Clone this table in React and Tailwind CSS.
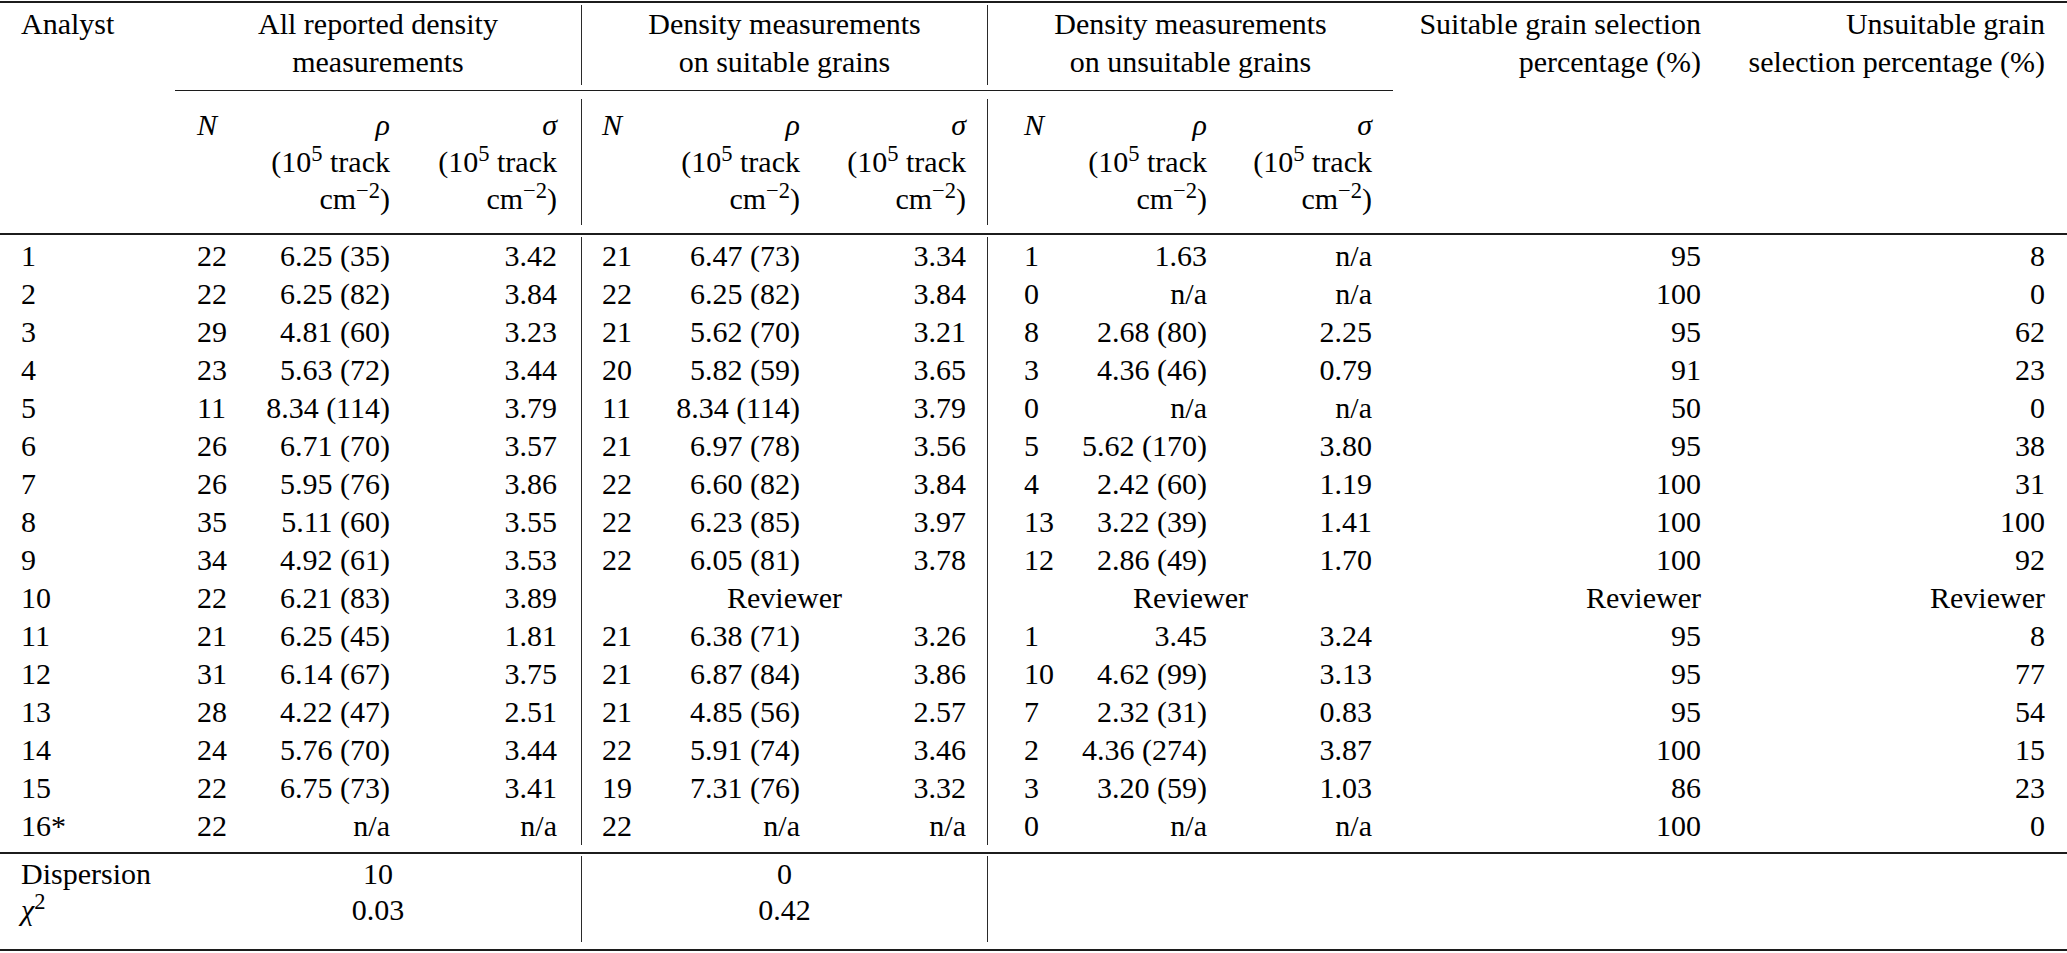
import React from "react";

// one grid for every row, so the columns line up all the way down
const COLS =
  "grid grid-cols-[175px_65px_150px_191px_69px_150px_187px_73px_147px_186px_328px_346px] whitespace-nowrap";
const VL = "border-l border-[#2a2a2a]";

const rows = [
  ["1", "22", "6.25 (35)", "3.42", "21", "6.47 (73)", "3.34", "1", "1.63", "n/a", "95", "8"],
  ["2", "22", "6.25 (82)", "3.84", "22", "6.25 (82)", "3.84", "0", "n/a", "n/a", "100", "0"],
  ["3", "29", "4.81 (60)", "3.23", "21", "5.62 (70)", "3.21", "8", "2.68 (80)", "2.25", "95", "62"],
  ["4", "23", "5.63 (72)", "3.44", "20", "5.82 (59)", "3.65", "3", "4.36 (46)", "0.79", "91", "23"],
  ["5", "11", "8.34 (114)", "3.79", "11", "8.34 (114)", "3.79", "0", "n/a", "n/a", "50", "0"],
  ["6", "26", "6.71 (70)", "3.57", "21", "6.97 (78)", "3.56", "5", "5.62 (170)", "3.80", "95", "38"],
  ["7", "26", "5.95 (76)", "3.86", "22", "6.60 (82)", "3.84", "4", "2.42 (60)", "1.19", "100", "31"],
  ["8", "35", "5.11 (60)", "3.55", "22", "6.23 (85)", "3.97", "13", "3.22 (39)", "1.41", "100", "100"],
  ["9", "34", "4.92 (61)", "3.53", "22", "6.05 (81)", "3.78", "12", "2.86 (49)", "1.70", "100", "92"],
  ["10", "22", "6.21 (83)", "3.89"],
  ["11", "21", "6.25 (45)", "1.81", "21", "6.38 (71)", "3.26", "1", "3.45", "3.24", "95", "8"],
  ["12", "31", "6.14 (67)", "3.75", "21", "6.87 (84)", "3.86", "10", "4.62 (99)", "3.13", "95", "77"],
  ["13", "28", "4.22 (47)", "2.51", "21", "4.85 (56)", "2.57", "7", "2.32 (31)", "0.83", "95", "54"],
  ["14", "24", "5.76 (70)", "3.44", "22", "5.91 (74)", "3.46", "2", "4.36 (274)", "3.87", "100", "15"],
  ["15", "22", "6.75 (73)", "3.41", "19", "7.31 (76)", "3.32", "3", "3.20 (59)", "1.03", "86", "23"],
  ["16*", "22", "n/a", "n/a", "22", "n/a", "n/a", "0", "n/a", "n/a", "100", "0"],
];

function Unit({ sym }) {
  return (
    <>
      <i>{sym}</i>
      <br />
      (10<sup>5</sup> track
      <br />
      cm<sup>−2</sup>)
    </>
  );
}

function DataRow({ r }) {
  return (
    <div className={COLS + " h-[38px] leading-[38px]"}>
      <div className="pl-[21px]">{r[0]}</div>
      <div className="pl-[22px]">{r[1]}</div>
      <div className="text-right">{r[2]}</div>
      <div className="text-right pr-[24px]">{r[3]}</div>
      {r.length === 4 ? (
        <>
          <div className={"col-span-3 text-center " + VL}>Reviewer</div>
          <div className={"col-span-3 text-center " + VL}>Reviewer</div>
          <div className="text-right pr-[20px]">Reviewer</div>
          <div className="text-right pr-[22px]">Reviewer</div>
        </>
      ) : (
        <>
          <div className={"pl-[20px] " + VL}>{r[4]}</div>
          <div className="text-right">{r[5]}</div>
          <div className="text-right pr-[21px]">{r[6]}</div>
          <div className={"pl-[36px] " + VL}>{r[7]}</div>
          <div className="text-right">{r[8]}</div>
          <div className="text-right pr-[21px]">{r[9]}</div>
          <div className="text-right pr-[20px]">{r[10]}</div>
          <div className="text-right pr-[22px]">{r[11]}</div>
        </>
      )}
    </div>
  );
}

export default function App() {
  return (
    <div className="w-[2067px] h-[953px] overflow-hidden bg-white text-black text-[30px] font-['Liberation_Serif','Times_New_Roman',serif]">
      <div className="pt-[1px]">
        <div className="h-[2px] bg-[#1c1c1c]" />

        {/* group headings */}
        <div className={COLS + " mt-[2px] h-[80px] leading-[38px]"}>
          <div className="pl-[21px]">Analyst</div>
          <div className="col-span-3 text-center">
            All reported density
            <br />
            measurements
          </div>
          <div className={"col-span-3 text-center " + VL}>
            Density measurements
            <br />
            on suitable grains
          </div>
          <div className={"col-span-3 text-center " + VL}>
            Density measurements
            <br />
            on unsuitable grains
          </div>
          <div className="text-right pr-[20px]">
            Suitable grain selection
            <br />
            percentage (%)
          </div>
          <div className="text-right pr-[22px]">
            Unsuitable grain
            <br />
            selection percentage (%)
          </div>
        </div>

        <div className="ml-[175px] mt-[5px] w-[1218px] h-px bg-[#1c1c1c]" />

        {/* column headings */}
        <div className={COLS + " mt-[8px] h-[126px] leading-[37px]"}>
          <div />
          <div className="pl-[22px] pt-[7px]">
            <i>N</i>
          </div>
          <div className="text-right pt-[7px]">
            <Unit sym="ρ" />
          </div>
          <div className="text-right pr-[24px] pt-[7px]">
            <Unit sym="σ" />
          </div>
          <div className={"pl-[20px] pt-[7px] " + VL}>
            <i>N</i>
          </div>
          <div className="text-right pt-[7px]">
            <Unit sym="ρ" />
          </div>
          <div className="text-right pr-[21px] pt-[7px]">
            <Unit sym="σ" />
          </div>
          <div className={"pl-[36px] pt-[7px] " + VL}>
            <i>N</i>
          </div>
          <div className="text-right pt-[7px]">
            <Unit sym="ρ" />
          </div>
          <div className="text-right pr-[21px] pt-[7px]">
            <Unit sym="σ" />
          </div>
          <div />
          <div />
        </div>

        <div className="mt-[8px] h-[2px] bg-[#1c1c1c]" />

        <div className="mt-[2px] flex flex-col">
          {rows.map((r) => (
            <DataRow key={r[0]} r={r} />
          ))}
        </div>

        <div className="mt-[7px] h-[2px] bg-[#1c1c1c]" />

        {/* summary */}
        <div className={COLS + " mt-[2px] h-[86px] leading-[36px]"}>
          <div className="pl-[21px]">
            Dispersion
            <br />
            <i>χ</i>
            <sup>2</sup>
          </div>
          <div className="col-span-3 text-center">
            10
            <br />
            0.03
          </div>
          <div className={"col-span-3 text-center " + VL}>
            0
            <br />
            0.42
          </div>
          <div className={"col-span-3 " + VL} />
          <div />
          <div />
        </div>

        <div className="mt-[7px] h-[2px] bg-[#1c1c1c]" />
      </div>
    </div>
  );
}
